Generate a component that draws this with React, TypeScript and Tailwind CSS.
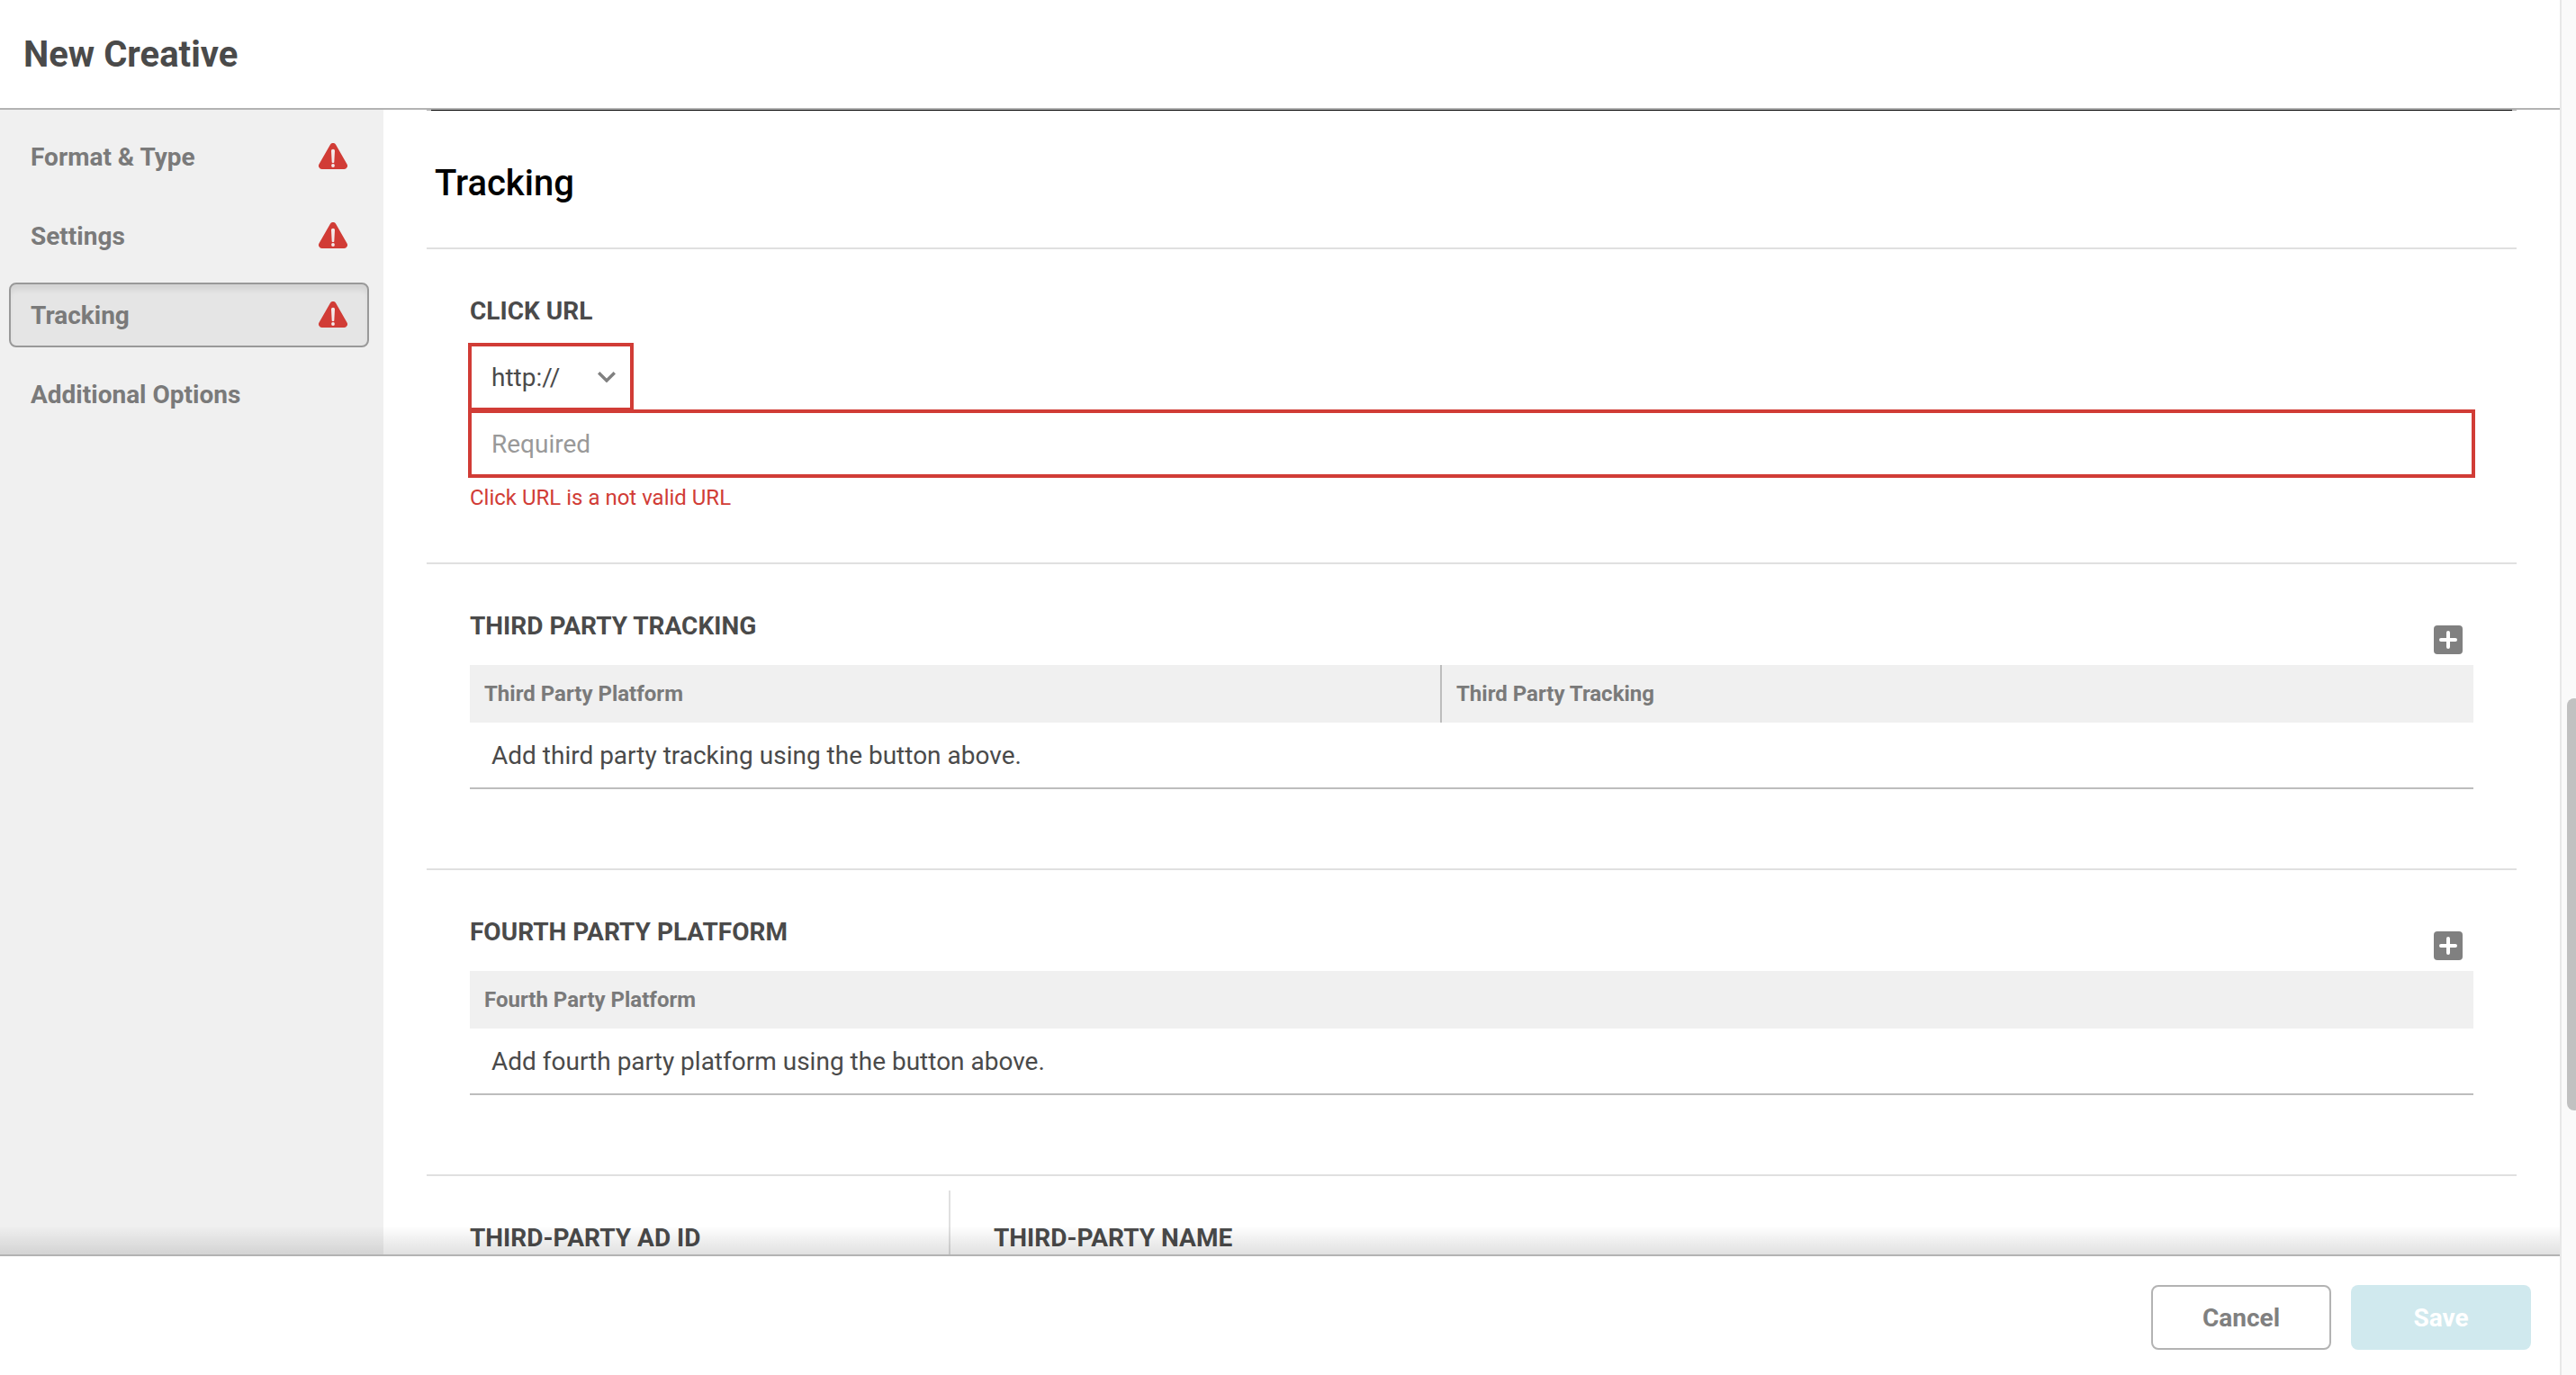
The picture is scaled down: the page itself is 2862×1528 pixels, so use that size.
import { ReactNode } from 'react'

interface NavItem {
  label: string
  hasError: boolean
}

const NAV_ITEMS: NavItem[] = [
  { label: 'Format & Type', hasError: true },
  { label: 'Settings', hasError: true },
  { label: 'Tracking', hasError: true },
  { label: 'Additional Options', hasError: false },
]

const ACTIVE_ITEM = 'Tracking'

// Icon components
const WarningIcon = ({ className }: { className?: string }) => (
  <svg className={className} viewBox="0 0 32 29">
    <path
      fill="#d13c36"
      d="M12.9 1.7a3.6 3.6 0 016.2 0l12.3 21.6a3.7 3.7 0 01-3.2 5.7H3.8a3.7 3.7 0 01-3.2-5.7z"
    />
    <path fill="#f3eaea" d="M14 8.6a2 1.8 0 014 0l-.7 12.6a.8.8 0 01-.8.8h-1a.8.8 0 01-.8-.8z" />
    <circle cx="16" cy="25" r="1.9" fill="#f3eaea" />
  </svg>
)

const ChevronDownIcon = ({ className }: { className?: string }) => (
  <svg className={className} viewBox="0 0 20 12" fill="none" stroke="#808080">
    <path strokeWidth={3.4} d="M1.2 1.2L10 10l8.8-8.8" />
  </svg>
)

const AddIcon = ({ className }: { className?: string }) => (
  <svg className={className} viewBox="0 0 32 32">
    <rect width="32" height="32" rx="4" fill="#808080" />
    <path stroke="#fff" strokeWidth={4} strokeLinecap="round" d="M16 8v16M8 16h16" />
  </svg>
)

const Sidebar = () => (
  <nav className="w-[426px] shrink-0 bg-[#f0f0f0] pt-4 pl-2.5">
    {NAV_ITEMS.map(({ label, hasError }) => (
      <a
        key={label}
        className={`mb-4 flex h-[72px] w-[400px] items-center justify-between rounded-lg border-2 px-[22px] pt-0.5 text-[28px] font-bold text-[#7a7a7a] ${
          label === ACTIVE_ITEM
            ? 'border-[#999999] bg-[#e5e5e5] shadow-[inset_0_8px_6px_-2px_rgba(0,0,0,0.08)]'
            : 'border-transparent'
        }`}
      >
        {label}
        {hasError && <WarningIcon className="mb-[3px] h-[29px] w-8" />}
      </a>
    ))}
  </nav>
)

const Section = ({ children }: { children: ReactNode }) => (
  <section className="border-t-2 border-[#e0e0e0] px-12">{children}</section>
)

const SectionLabel = ({ children }: { children: ReactNode }) => (
  <h3 className="pt-[53px] text-[28px] leading-8 font-bold uppercase">{children}</h3>
)

interface TrackingTableProps {
  title: string
  columns: string[]
  /** Text shown while the table has no rows */
  emptyText: string
}

const TrackingTable = ({ title, columns, emptyText }: TrackingTableProps) => (
  <Section>
    <div className="flex h-28 justify-between pr-3">
      <SectionLabel>{title}</SectionLabel>
      <button className="mt-[68px] h-8">
        <AddIcon className="size-8" />
      </button>
    </div>
    <div className="flex h-16 bg-[#f0f0f0] text-2xl font-bold text-[#7a7a7a]">
      {columns.map((column, index) => (
        <div
          key={column}
          className={`flex items-center px-4 ${
            index < columns.length - 1
              ? 'w-[1080px] border-r-2 border-[#bdbdbd]'
              : 'flex-1'
          }`}
        >
          {column}
        </div>
      ))}
    </div>
    <div className="flex h-[74px] items-center border-b-2 border-[#bdbdbd] pt-0.5 pl-6 text-[28px]">
      {emptyText}
    </div>
  </Section>
)

const App = () => (
  <div className="flex h-[1528px] w-[2862px] overflow-hidden bg-white font-['Roboto',sans-serif] text-[#4a4a4a]">
    <div className="flex w-[2844px] shrink-0 flex-col">
      <header className="flex h-[122px] shrink-0 items-center border-b-2 border-[#b3b3b3] pt-0.5 pl-[26px]">
        <h1 className="text-[40px] font-bold">New Creative</h1>
      </header>

      <div className="relative flex h-[1272px] shrink-0 overflow-hidden">
        <Sidebar />

        <main className="flex-1 px-12">
          {/* Bottom edge of the previous panel */}
          <div className="h-px bg-[#b3b3b3] px-[5px]">
            <div className="h-px bg-black" />
          </div>
          <h2 className="flex h-[152px] items-center pt-2.5 pl-[9px] text-[40px] font-medium text-black">
            Tracking
          </h2>

          <Section>
            <div className="h-[348px]">
              <SectionLabel>Click URL</SectionLabel>
              <div className="-mx-0.5 pt-[19px]">
                <div className="flex h-[76px] w-[184px] items-center justify-between border-4 border-[#d13c36] pr-4 pl-[22px] text-[28px]">
                  <span className="pt-0.5">http://</span>
                  <ChevronDownIcon className="h-3 w-5" />
                </div>
                <div className="-mt-0.5 flex h-[76px] items-center border-4 border-[#d13c36] pt-0.5 pl-[22px] text-[28px] text-[#999999]">
                  Required
                </div>
              </div>
              <p className="pt-1.5 text-2xl text-[#d13c36]">Click URL is a not valid URL</p>
            </div>
          </Section>

          <div className="h-[340px]">
            <TrackingTable
              title="Third Party Tracking"
              columns={['Third Party Platform', 'Third Party Tracking']}
              emptyText="Add third party tracking using the button above."
            />
          </div>
          <div className="h-[340px]">
            <TrackingTable
              title="Fourth Party Platform"
              columns={['Fourth Party Platform']}
              emptyText="Add fourth party platform using the button above."
            />
          </div>

          <Section>
            <div className="flex">
              <div className="w-[532px]">
                <SectionLabel>Third-Party Ad ID</SectionLabel>
              </div>
              <div className="mt-4 h-[120px] border-l-2 border-[#e0e0e0] pl-12">
                <div className="-mt-4">
                  <SectionLabel>Third-Party Name</SectionLabel>
                </div>
              </div>
            </div>
          </Section>
        </main>

        {/* Shadow cast by the footer over the scrolled content */}
        <div className="absolute inset-x-0 bottom-0 h-8 bg-linear-to-t from-black/12 to-transparent" />
      </div>

      <footer className="flex flex-1 items-start justify-end gap-[22px] border-t-2 border-[#b3b3b3] pt-8 pr-8 text-[28px] font-bold">
        <button className="h-[72px] w-[200px] rounded-lg border-2 border-[#b3b3b3] pt-0.5 text-[#808080]">
          Cancel
        </button>
        <button className="h-[72px] w-[200px] rounded-lg bg-[#d0e9ee] pt-0.5 text-white">
          Save
        </button>
      </footer>
    </div>

    {/* Scrollbar */}
    <div className="w-[18px] shrink-0 border-l-2 border-[#e8e8e8] bg-[#fafafa] pt-[776px] pl-1.5">
      <div className="h-[458px] w-4 rounded-lg bg-[#c1c1c1]" />
    </div>
  </div>
)

export default App
